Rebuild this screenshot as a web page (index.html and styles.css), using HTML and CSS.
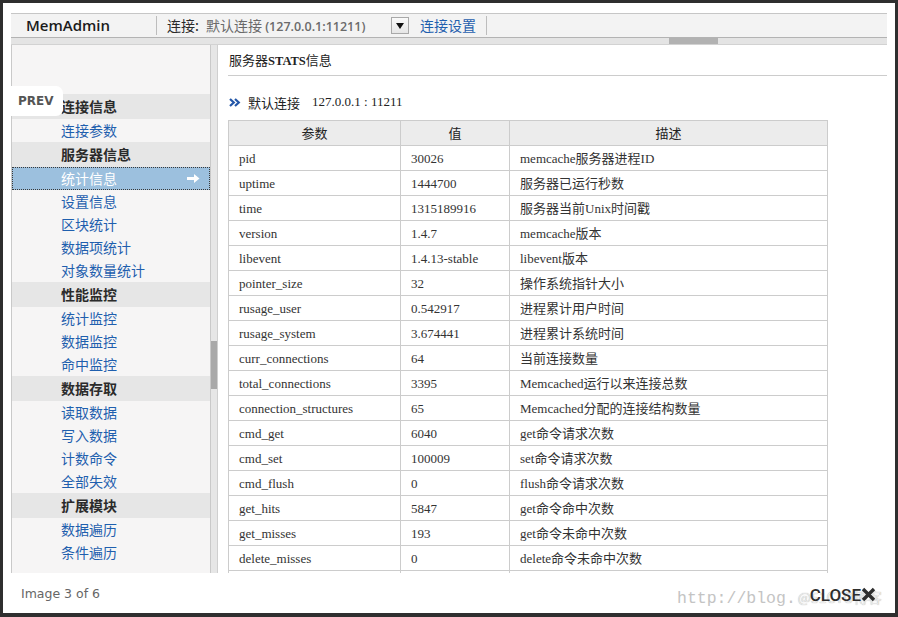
FILE: index.html
```html
<!DOCTYPE html>
<html>
<head>
<meta charset="utf-8">
<title>MemAdmin</title>
<link rel="stylesheet" href="styles.css">
</head>
<body>
<div class="lightbox">
  <div class="shot">
    <div class="topbar">
      <div class="brand">MemAdmin</div>
      <div class="conn-label">连接:</div>
      <div class="conn-name">默认连接 <span class="conn-addr">(127.0.0.1:11211)</span></div>
      <div class="dd"><svg width="8" height="6" viewBox="0 0 8 6"><polygon points="0,0 8,0 4,6" fill="#111"/></svg></div>
      <div class="conn-set">连接设置</div>
    </div>
    <div class="hscroll"><div class="hthumb"></div></div>
    <div class="content">
      <div class="side">
        <div class="mh">连接信息</div>
        <div class="mi">连接参数</div>
        <div class="mh">服务器信息</div>
        <div class="mi active">统计信息<svg class="arrow" width="13" height="9" viewBox="0 0 13 9"><polygon points="0,3 7,3 7,0 12.5,4.5 7,9 7,6 0,6" fill="#fff"/></svg></div>
        <div class="mi">设置信息</div>
        <div class="mi">区块统计</div>
        <div class="mi">数据项统计</div>
        <div class="mi">对象数量统计</div>
        <div class="mh">性能监控</div>
        <div class="mi">统计监控</div>
        <div class="mi">数据监控</div>
        <div class="mi">命中监控</div>
        <div class="mh">数据存取</div>
        <div class="mi">读取数据</div>
        <div class="mi">写入数据</div>
        <div class="mi">计数命令</div>
        <div class="mi">全部失效</div>
        <div class="mh">扩展模块</div>
        <div class="mi">数据遍历</div>
        <div class="mi">条件遍历</div>
      </div>
      <div class="vscroll"><div class="vthumb"></div></div>
      <div class="main">
        <div class="title">服务器<span class="title-en">STATS</span>信息</div>
        <div class="crumb">
          <svg class="chev" width="12" height="9" viewBox="0 0 12 9"><path d="M1 1 L4.8 4.5 L1 8 M6 1 L9.8 4.5 L6 8" fill="none" stroke="#2457a8" stroke-width="2.2"/></svg>
          <span class="crumb-name">默认连接</span>
          <span class="crumb-addr">127.0.0.1 : 11211</span>
        </div>
        <table class="stats">
          <colgroup><col class="c1"><col class="c2"><col class="c3"></colgroup>
          <thead><tr><th>参数</th><th>值</th><th>描述</th></tr></thead>
          <tbody>
            <tr><td>pid</td><td>30026</td><td>memcache服务器进程ID</td></tr>
            <tr><td>uptime</td><td>1444700</td><td>服务器已运行秒数</td></tr>
            <tr><td>time</td><td>1315189916</td><td>服务器当前Unix时间戳</td></tr>
            <tr><td>version</td><td>1.4.7</td><td>memcache版本</td></tr>
            <tr><td>libevent</td><td>1.4.13-stable</td><td>libevent版本</td></tr>
            <tr><td>pointer_size</td><td>32</td><td>操作系统指针大小</td></tr>
            <tr><td>rusage_user</td><td>0.542917</td><td>进程累计用户时间</td></tr>
            <tr><td>rusage_system</td><td>3.674441</td><td>进程累计系统时间</td></tr>
            <tr><td>curr_connections</td><td>64</td><td>当前连接数量</td></tr>
            <tr><td>total_connections</td><td>3395</td><td>Memcached运行以来连接总数</td></tr>
            <tr><td>connection_structures</td><td>65</td><td>Memcached分配的连接结构数量</td></tr>
            <tr><td>cmd_get</td><td>6040</td><td>get命令请求次数</td></tr>
            <tr><td>cmd_set</td><td>100009</td><td>set命令请求次数</td></tr>
            <tr><td>cmd_flush</td><td>0</td><td>flush命令请求次数</td></tr>
            <tr><td>get_hits</td><td>5847</td><td>get命令命中次数</td></tr>
            <tr><td>get_misses</td><td>193</td><td>get命令未命中次数</td></tr>
            <tr><td>delete_misses</td><td>0</td><td>delete命令未命中次数</td></tr>
            <tr><td></td><td></td><td></td></tr>
          </tbody>
        </table>
      </div>
    </div>
  </div>
  <div class="caption">
    <div class="count">Image 3 of 6</div>
    <div class="close">CLOSE<svg width="15" height="15" viewBox="0 0 15 15"><path d="M2 2 L13 13 M13 2 L2 13" stroke="#2e2e2e" stroke-width="3.4" stroke-linecap="butt"/></svg></div>
  </div>
  <div class="watermark"><span class="wm-url">http://blog.</span><span class="wm-site">@51CTO博客</span></div>
  <div class="prev">PREV</div>
</div>
</body>
</html>
```

FILE: styles.css
```css
* { box-sizing: border-box; }
html, body { margin: 0; padding: 0; }
body {
  background: #2f2f2f;
  width: 898px;
  height: 617px;
  overflow: hidden;
  font-family: "Noto Sans CJK SC", sans-serif;
}
.lightbox {
  position: relative;
  margin: 3px 3px 0 3px;
  height: 610px;
  background: #fff;
  padding: 10px 8px 0 8px;
}
.shot {
  height: 560px;
  overflow: hidden;
  display: flex;
  flex-direction: column;
}

/* top bar */
.topbar {
  height: 25px;
  flex: none;
  display: flex;
  align-items: center;
  background: #f3f3f3;
  border-top: 1px solid #c6c6c6;
  border-bottom: 1px solid #b3b3b3;
}
.brand {
  width: 146px;
  height: 19px;
  padding-left: 15px;
  border-right: 1px solid #bdbdbd;
  font-family: "Open Sans", sans-serif;
  font-weight: 600;
  font-size: 15px;
  line-height: 19px;
  color: #1b1b1b;
}
.conn-label {
  width: 49px;
  padding-left: 10px;
  font-size: 14px;
  color: #2a2a2a;
  line-height: 19px;
}
.conn-name {
  width: 185px;
  font-size: 14px;
  color: #6a6a6a;
  line-height: 19px;
  white-space: nowrap;
}
.conn-addr {
  font-family: "Open Sans", sans-serif;
  font-weight: 600;
  font-size: 12.5px;
  color: #6a6a6a;
}
.dd {
  width: 18px;
  height: 17px;
  border: 1px solid #a9a9a9;
  background: linear-gradient(#fafafa, #e6e6e6);
  display: flex;
  align-items: center;
  justify-content: center;
}
.conn-set {
  margin-left: 11px;
  padding-right: 10px;
  height: 19px;
  border-right: 1px solid #bdbdbd;
  font-size: 14px;
  line-height: 19px;
  color: #1f5fae;
}

/* horizontal scrollbar */
.hscroll {
  height: 7px;
  flex: none;
  background: #e4e4e4;
  border-bottom: 1px solid #d2d2d2;
}
.hthumb {
  margin-left: 658px;
  width: 49px;
  height: 100%;
  background: #b2b2b2;
}

/* body */
.content {
  flex: 1;
  display: flex;
  min-height: 0;
}
.side {
  width: 200px;
  flex: none;
  background: #f6f5f5;
  border-left: 1px solid #c9c9c9;
  border-right: 1px solid #c9c9c9;
  padding-top: 49px;
}
.mh {
  height: 25px;
  line-height: 25px;
  padding-left: 49px;
  background: #e6e6e6;
  font-size: 14px;
  font-weight: 700;
  color: #2b2b2b;
}
.mi {
  height: 23px;
  line-height: 23px;
  padding-left: 49px;
  font-size: 14px;
  color: #1f5fae;
  display: flex;
  align-items: center;
}
.mi.active {
  background: #9cc0de;
  color: #fff;
  outline: 1px dotted #3a3a3a;
  outline-offset: -1px;
}
.arrow { margin-left: auto; margin-right: 10px; }

.vscroll {
  width: 6px;
  flex: none;
  background: #e6e6e6;
}
.vthumb {
  margin-top: 296px;
  height: 48px;
  background: #a9a9a9;
}

.main {
  flex: 1;
  background: #fff;
  border-left: 1px solid #cfcfcf;
  padding-left: 10px;
  font-family: "Liberation Serif", "Noto Sans CJK SC", serif;
  font-size: 13px;
  color: #2e2e2e;
}
.title {
  padding-top: 2px;
  height: 31px;
  line-height: 28px;
  border-bottom: 1px solid #cccccc;
  padding-left: 1px;
  color: #222;
}
.title-en { font-weight: 700; font-size: 12.5px; }
.crumb {
  margin-top: 16px;
  height: 20px;
  display: flex;
  align-items: center;
  padding-left: 1px;
}
.chev { margin-right: 7px; }
.crumb-name { color: #222; margin-right: 12px; }
.crumb-addr { color: #222; }

.stats {
  margin-top: 8px;
  border-collapse: collapse;
  table-layout: fixed;
  width: 599px;
}
.c1 { width: 172px; }
.c2 { width: 109px; }
.c3 { width: 318px; }
.stats th, .stats td {
  border: 1px solid #cccccc;
  height: 25px;
  line-height: 23px;
  padding: 0 10px;
  white-space: nowrap;
  overflow: hidden;
}
.stats th {
  background: #ececec;
  font-weight: 400;
  text-align: center;
  color: #222;
  font-size: 13px;
}
.stats td { color: #333; }

/* caption */
.caption {
  height: 40px;
  display: flex;
  align-items: center;
  padding: 0 11px 0 10px;
}
.count {
  font-family: "DejaVu Sans", sans-serif;
  font-size: 12.5px;
  color: #666;
  padding-top: 1px;
}
.close {
  margin-left: auto;
  position: relative;
  z-index: 2;
  display: flex;
  align-items: center;
  font-family: Roboto, "Liberation Sans", sans-serif;
  font-weight: 500;
  font-size: 17px;
  color: #2e2e2e;
  padding-top: 3px;
}

.watermark {
  position: absolute;
  left: 674px;
  top: 584px;
  display: flex;
  align-items: baseline;
  z-index: 1;
  white-space: nowrap;
}
.wm-url {
  font-family: "Liberation Mono", monospace;
  font-size: 16.5px;
  color: #c4c4c4;
}
.wm-site {
  font-size: 14px;
  color: #ececec;
  text-shadow: 0 0 1px #a0a0a0;
  margin-left: 2px;
}

.prev {
  position: absolute;
  left: 8px;
  top: 83px;
  width: 52px;
  height: 30px;
  background: #fff;
  border-radius: 0 7px 7px 0;
  font-family: "DejaVu Sans", sans-serif;
  font-weight: 700;
  font-size: 12px;
  line-height: 30px;
  padding-left: 7px;
  color: #555;
  z-index: 3;
}
```
